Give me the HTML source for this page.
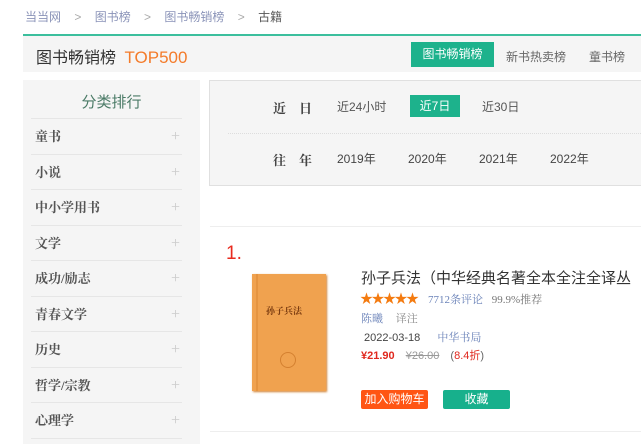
<!DOCTYPE html>
<html><head><meta charset="utf-8"><style>
*{margin:0;padding:0;box-sizing:border-box}
body{width:641px;height:444px;overflow:hidden;background:#fff;font-family:"Liberation Sans","Noto Sans CJK SC",sans-serif;position:relative;color:#333}
.a{position:absolute;white-space:nowrap}
.serif{font-family:"Liberation Serif","Noto Serif CJK SC",serif}
</style></head><body>
<div class="a" style="left:25px;top:8px;font-size:12px;color:#8a93b8">当当网 <span style="color:#aaa;margin:0 10px">&gt;</span> 图书榜 <span style="color:#aaa;margin:0 10px">&gt;</span> 图书畅销榜 <span style="color:#aaa;margin:0 10px">&gt;</span> <span style="color:#555">古籍</span></div>
<div class="a" style="left:23px;top:34px;width:618px;height:2px;background:#3cbf9d"></div>
<div class="a" style="left:23px;top:36px;width:618px;height:36px;background:#f5f5f5"></div>
<div class="a" style="left:36px;top:44px;font-size:16px;color:#333">图书畅销榜 <span style="color:#f47b2a;margin-left:4px;font-size:17px">TOP500</span></div>
<div class="a" style="left:411px;top:42px;width:83px;height:25px;background:#1db28c;color:#fff;font-size:12px;line-height:25px;text-align:center">图书畅销榜</div>
<div class="a" style="left:506px;top:48px;font-size:12px;color:#666">新书热卖榜</div>
<div class="a" style="left:589px;top:48px;font-size:12px;color:#666">童书榜</div>

<div class="a" style="left:23px;top:80px;width:177px;height:364px;background:#f5f5f5"></div>
<div class="a" style="left:23px;top:91px;width:177px;text-align:center;font-size:15px;color:#4a7a66">分类排行</div>
<div class="a serif" style="left:31px;top:118px;width:151px;font-size:13px;font-weight:bold;color:#555">
<div style="border-top:1px solid #e6e6e6;height:35.5px;line-height:35px;padding-left:4px">童书<span style="float:right;color:#ccc;font-weight:normal;font-size:16px;margin-right:2px">+</span></div>
<div style="border-top:1px solid #e6e6e6;height:35.5px;line-height:35px;padding-left:4px">小说<span style="float:right;color:#ccc;font-weight:normal;font-size:16px;margin-right:2px">+</span></div>
<div style="border-top:1px solid #e6e6e6;height:35.5px;line-height:35px;padding-left:4px">中小学用书<span style="float:right;color:#ccc;font-weight:normal;font-size:16px;margin-right:2px">+</span></div>
<div style="border-top:1px solid #e6e6e6;height:35.5px;line-height:35px;padding-left:4px">文学<span style="float:right;color:#ccc;font-weight:normal;font-size:16px;margin-right:2px">+</span></div>
<div style="border-top:1px solid #e6e6e6;height:35.5px;line-height:35px;padding-left:4px">成功/励志<span style="float:right;color:#ccc;font-weight:normal;font-size:16px;margin-right:2px">+</span></div>
<div style="border-top:1px solid #e6e6e6;height:35.5px;line-height:35px;padding-left:4px">青春文学<span style="float:right;color:#ccc;font-weight:normal;font-size:16px;margin-right:2px">+</span></div>
<div style="border-top:1px solid #e6e6e6;height:35.5px;line-height:35px;padding-left:4px">历史<span style="float:right;color:#ccc;font-weight:normal;font-size:16px;margin-right:2px">+</span></div>
<div style="border-top:1px solid #e6e6e6;height:35.5px;line-height:35px;padding-left:4px">哲学/宗教<span style="float:right;color:#ccc;font-weight:normal;font-size:16px;margin-right:2px">+</span></div>
<div style="border-top:1px solid #e6e6e6;height:35.5px;line-height:35px;padding-left:4px">心理学<span style="float:right;color:#ccc;font-weight:normal;font-size:16px;margin-right:2px">+</span></div>
<div style="border-top:1px solid #e6e6e6"></div>
</div>

<div class="a" style="left:209px;top:80px;width:440px;height:106px;background:#f5f5f5;border:1px solid #e0e0e0"></div>
<div class="a serif" style="left:273px;top:98px;font-size:13px;font-weight:bold;color:#444">近&nbsp;&nbsp;&nbsp;&nbsp;日</div>
<div class="a" style="left:337px;top:98px;font-size:12px;color:#555">近24小时</div>
<div class="a" style="left:410px;top:95px;width:50px;height:22px;background:#1db28c;color:#fff;font-size:12px;line-height:22px;text-align:center">近7日</div>
<div class="a" style="left:482px;top:98px;font-size:12px;color:#555">近30日</div>
<div class="a" style="left:228px;top:133px;width:413px;border-top:1px dotted #ddd"></div>
<div class="a serif" style="left:273px;top:150px;font-size:13px;font-weight:bold;color:#444">往&nbsp;&nbsp;&nbsp;&nbsp;年</div>
<div class="a" style="left:337px;top:150px;font-size:12px;color:#444">2019年</div>
<div class="a" style="left:408px;top:150px;font-size:12px;color:#444">2020年</div>
<div class="a" style="left:479px;top:150px;font-size:12px;color:#444">2021年</div>
<div class="a" style="left:550px;top:150px;font-size:12px;color:#444">2022年</div>

<div class="a" style="left:210px;top:226px;width:431px;border-top:1px solid #eee"></div>
<div class="a" style="left:226px;top:243px;font-size:19px;color:#e82b1f">1.</div>
<div class="a" style="left:252px;top:274px;width:74px;height:117px;background:#f0a24f;box-shadow:1px 1px 2px #d08030">
<div style="position:absolute;left:4px;top:0;width:2px;height:117px;background:#e59440"></div>
<div style="position:absolute;left:14px;top:30px;font-size:9px;color:#7a3b10;font-weight:bold" class="serif">孙子兵法</div>
<div style="position:absolute;left:28px;top:78px;width:16px;height:16px;border:1px solid #d48030;border-radius:50%"></div>
</div>
<div class="a" style="left:361px;top:267px;font-size:15px;color:#333">孙子兵法（中华经典名著全本全注全译丛</div>
<div class="a" style="left:360px;top:288px;font-size:13px;color:#f47b10;letter-spacing:-1.5px">★★★★★</div>
<div class="a serif" style="left:428px;top:291px;font-size:11px;color:#6a82b8">7712条评论 <span style="color:#777;margin-left:6px">99.9%推荐</span></div>
<div class="a serif" style="left:361px;top:310px;font-size:11px;color:#6a82b8">陈曦 <span style="color:#888;margin-left:10px">译注</span></div>
<div class="a" style="left:364px;top:329px;font-size:11px;color:#444">2022-03-18 <span class="serif" style="color:#6a82b8;margin-left:14px">中华书局</span></div>
<div class="a" style="left:361px;top:347px;font-size:11px;color:#e0281e;font-weight:bold">¥21.90 <span style="color:#999;font-weight:normal;text-decoration:line-through;margin-left:8px">¥26.00</span> <span style="color:#e0281e;font-weight:normal;margin-left:8px"><span style="color:#666">(</span>8.4折<span style="color:#666">)</span></span></div>
<div class="a" style="left:361px;top:390px;width:67px;height:19px;background:#ff5514;border-radius:2px;color:#fff;font-size:12px;line-height:19px;text-align:center">加入购物车</div>
<div class="a" style="left:443px;top:390px;width:67px;height:19px;background:#17b08c;border-radius:2px;color:#fff;font-size:12px;line-height:19px;text-align:center">收藏</div>
<div class="a" style="left:210px;top:431px;width:431px;border-top:1px solid #eee"></div>
</body></html>
